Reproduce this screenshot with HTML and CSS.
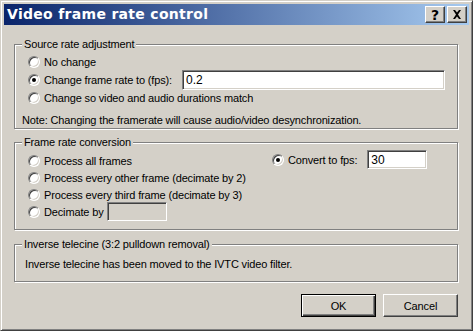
FILE: index.html
```html
<!DOCTYPE html>
<html>
<head>
<meta charset="utf-8">
<link rel="stylesheet" href="styles.css">
</head>
<body>
<div class="window">
  <div class="titlebar">
    <span class="title">Video frame rate control</span>
    <div class="tbuttons">
      <span class="tbtn">?</span>
      <span class="tbtn">
        <svg width="10" height="9" viewBox="0 0 10 9"><path d="M1 0h2l2 2.5L7 0h2L6 4.5 9 9H7L5 6.5 3 9H1l3-4.5z" fill="#000"/></svg>
      </span>
    </div>
  </div>
  <div class="client">
    <div class="group g1">
      <span class="legend">Source rate adjustment</span>
      <div class="row"><span class="radio"></span><span>No change</span></div>
      <div class="row"><span class="radio checked"></span><span class="lbl">Change frame rate to (fps):</span><span class="edit wide">0.2</span></div>
      <div class="row"><span class="radio"></span><span>Change so video and audio durations match</span></div>
      <div class="note">Note: Changing the framerate will cause audio/video desynchronization.</div>
    </div>
    <div class="group g2">
      <span class="legend">Frame rate conversion</span>
      <div class="cols">
        <div class="col">
          <div class="row c"><span class="radio"></span><span>Process all frames</span></div>
          <div class="row c"><span class="radio"></span><span>Process every other frame (decimate by 2)</span></div>
          <div class="row c"><span class="radio"></span><span>Process every third frame (decimate by 3)</span></div>
          <div class="row c"><span class="radio"></span><span class="lbl tight">Decimate by</span><span class="edit small disabled"></span></div>
        </div>
        <div class="col right">
          <div class="row c"><span class="radio checked"></span><span class="lbl wide-gap">Convert to fps:</span><span class="edit small">30</span></div>
        </div>
      </div>
    </div>
    <div class="group g3">
      <span class="legend">Inverse telecine (3:2 pulldown removal)</span>
      <div class="info">Inverse telecine has been moved to the IVTC video filter.</div>
    </div>
    <div class="buttons">
      <span class="btn default">OK</span>
      <span class="btn">Cancel</span>
    </div>
  </div>
</div>
</body>
</html>
```
FILE: styles.css
```css
html, body { margin: 0; padding: 0; background: #d4d0c8; }
body { font-family: "Liberation Sans", Arial, sans-serif; font-size: 11px; color: #000; letter-spacing: -0.15px; }

.window {
  width: 473px; height: 331px; box-sizing: border-box;
  background: #d4d0c8;
  border: 1px solid; border-color: #d4d0c8 #404040 #404040 #d4d0c8;
  box-shadow: inset 1px 1px 0 #fff, inset -1px -1px 0 #808080;
  padding: 3px;
  display: flex; flex-direction: column;
}
.titlebar {
  height: 21px; flex: none;
  background: linear-gradient(to right, #0a246a, #a6caf0);
  display: flex; align-items: center; justify-content: space-between;
  padding: 0 2px 0 2px;
}
.title {
  color: #fff; font-family: "DejaVu Sans", Verdana, sans-serif; font-weight: bold; font-size: 14px;
  letter-spacing: 0.3px; padding-left: 1px; line-height: 21px;
}
.tbuttons { display: flex; gap: 2px; }
.tbtn {
  width: 20px; height: 17px; box-sizing: border-box;
  background: #d4d0c8;
  border: 1px solid; border-color: #fff #404040 #404040 #fff;
  box-shadow: inset -1px -1px 0 #808080;
  display: flex; align-items: center; justify-content: center;
  font-family: "DejaVu Sans", sans-serif; font-weight: bold; font-size: 14px; line-height: 1;
  letter-spacing: 0;
}

.client { flex: 1; padding: 19px 11px 0 10px; display: flex; flex-direction: column; }

.group {
  position: relative; flex: none;
  border: 1px solid #808080;
  box-shadow: inset 1px 1px 0 #fff, 1px 1px 0 #fff;
  box-sizing: border-box;
}
.legend {
  position: absolute; top: -7px; left: 7px;
  background: #d4d0c8; padding: 0 2px; line-height: 13px;
}
.g1 { height: 85px; padding: 8px 0 0 13px; }
.g2 { margin-top: 13px; height: 88px; padding: 9px 0 0 13px; }
.g3 { margin-top: 14px; height: 38px; padding: 13px 0 0 10px; }

.row { display: flex; align-items: center; height: 18px; white-space: nowrap; }
.row .radio { margin-right: 4px; }
.row.c { height: 17px; }
.lbl { margin-right: 6px; }
.lbl.tight { margin-right: 4px; }
.lbl.wide-gap { margin-right: 10px; }

.radio {
  position: relative; flex: none;
  width: 12px; height: 12px; box-sizing: border-box; border-radius: 50%;
  background: #fff;
  border: 1px solid; border-color: #808080 #fff #fff #808080;
  box-shadow: inset 1px 1px 0 #404040, inset -1px -1px 0 #d4d0c8;
}
.radio.checked::after {
  content: ""; position: absolute; left: 3px; top: 3px; width: 4px; height: 4px;
  border-radius: 50%; background: #000;
}

.edit {
  height: 20px; box-sizing: border-box; background: #fff; flex: none;
  border: 1px solid; border-color: #808080 #fff #fff #808080;
  box-shadow: inset 1px 1px 0 #404040, inset -1px -1px 0 #d4d0c8;
  padding: 2px 3px; line-height: 14px; font-size: 12px; letter-spacing: 0;
}
.edit.wide { width: 263px; margin-left: 4px; }
.edit.small { width: 60px; height: 19px; }
.edit.disabled { background: #d4d0c8; }

.note { margin-top: 7px; margin-left: -6px; }

.cols { display: flex; }
.col { width: 244px; flex: none; }
.col.right { width: auto; margin-top: -1px; }

.buttons { display: flex; justify-content: flex-end; gap: 7px; margin-top: 12px; }
.btn {
  width: 75px; height: 23px; box-sizing: border-box;
  background: #d4d0c8;
  border: 1px solid; border-color: #fff #404040 #404040 #fff;
  box-shadow: inset -1px -1px 0 #808080;
  display: flex; align-items: center; justify-content: center;
}
.btn.default { border: 1px solid #000; box-shadow: inset 1px 1px 0 #fff, inset -1px -1px 0 #404040, inset -2px -2px 0 #808080; }
```
